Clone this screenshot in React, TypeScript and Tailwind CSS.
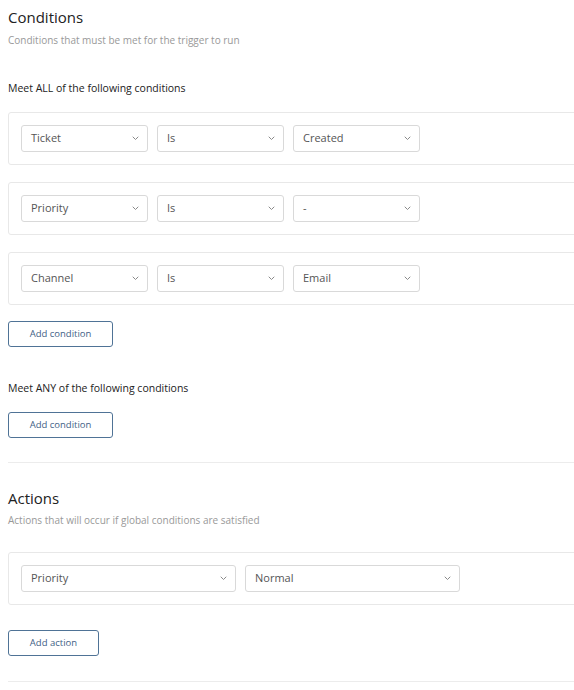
import React from "react";

const Chevron = () => (
  <svg width="7" height="5" viewBox="0 0 7 5" fill="none" className="shrink-0">
    <path d="M1 1l2.5 2.5L6 1" stroke="#8a8a8a" strokeWidth="1" strokeLinecap="round" strokeLinejoin="round" />
  </svg>
);

const Select = ({ value, width }: { value: string; width: string }) => (
  <div
    className={`flex h-[27px] ${width} items-center justify-between rounded-[3px] border border-[#d9d9d9] bg-white pl-[9px] pr-[8px] text-[11px] text-[#555]`}
  >
    <span>{value}</span>
    <Chevron />
  </div>
);

const ConditionRow = ({ items }: { items: string[] }) => (
  <div className="flex gap-[9px] rounded-[3px] border border-[#e8e8e8] bg-white px-[12px] py-[12px]">
    {items.map((v, i) => (
      <Select key={i} value={v} width="w-[127px]" />
    ))}
  </div>
);

const OutlineButton = ({ label, width }: { label: string; width: string }) => (
  <button
    className={`flex h-[26px] ${width} items-center justify-center rounded-[3px] border border-[#4f7396] bg-white text-[9.5px] text-[#3f5f86]`}
  >
    {label}
  </button>
);

export default function App() {
  return (
    <div className="w-full overflow-hidden bg-white" style={{ fontFamily: '"Open Sans", "Noto Sans", sans-serif' }}>
      <div className="w-[620px] pl-2 pt-[7px]">
        {/* Conditions */}
        <section>
          <h1 className="text-[15px] leading-[20px] text-[#222]">Conditions</h1>
          <p className="mt-[6px] text-[10px] leading-[14px] text-[#999]">
            Conditions that must be met for the trigger to run
          </p>
        </section>

        <h3 className="mt-[34px] text-[10.5px] font-medium leading-[14px] text-[#222]">
          Meet ALL of the following conditions
        </h3>

        <div className="mt-[17px] flex flex-col gap-[17px]">
          <ConditionRow items={["Ticket", "Is", "Created"]} />
          <ConditionRow items={["Priority", "Is", "-"]} />
          <ConditionRow items={["Channel", "Is", "Email"]} />
        </div>

        <div className="mt-[16px]">
          <OutlineButton label="Add condition" width="w-[105px]" />
        </div>

        <h3 className="mt-[34px] text-[10.5px] font-medium leading-[14px] text-[#222]">
          Meet ANY of the following conditions
        </h3>

        <div className="mt-[17px]">
          <OutlineButton label="Add condition" width="w-[105px]" />
        </div>

        <hr className="mt-[24px] border-t border-[#ececec]" />

        {/* Actions */}
        <section className="mt-[25px]">
          <h1 className="text-[15px] leading-[20px] text-[#222]">Actions</h1>
          <p className="mt-[5px] text-[10px] leading-[14px] text-[#999]">
            Actions that will occur if global conditions are satisfied
          </p>
        </section>

        <div className="mt-[25px] flex gap-[9px] rounded-[3px] border border-[#e8e8e8] bg-white px-[12px] py-[12px]">
          <Select value="Priority" width="w-[215px]" />
          <Select value="Normal" width="w-[215px]" />
        </div>

        <div className="mt-[25px]">
          <OutlineButton label="Add action" width="w-[91px]" />
        </div>

        <hr className="mt-[25px] border-t border-[#ececec]" />
        <div className="h-[20px]" />
      </div>
    </div>
  );
}
